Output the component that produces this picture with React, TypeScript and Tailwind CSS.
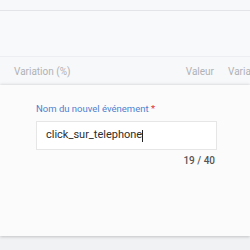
export default function App() {
  return (
    <div className="w-[250px] h-[250px] overflow-hidden bg-[#f4f5f7] font-['Roboto',_'Liberation_Sans',_sans-serif] flex flex-col">
      <div className="h-[11px] bg-[#f7f8fa] border-b border-[#e3e4e8]" />
      <div className="h-[46px] bg-[#f8f9fb] border-b border-[#eceef1]" />
      <div className="h-[28px] bg-[#f7f8fa] flex items-center text-[10px] text-[#b0b2b6] whitespace-nowrap">
        <span className="ml-[14px]">Variation (%)</span>
        <span className="ml-auto">Valeur</span>
        <span className="ml-[14px] w-[22px] overflow-hidden">Varia</span>
      </div>
      <div className="h-[151px] bg-[#fbfbfb] shadow-[0_1px_3px_rgba(0,0,0,0.18),0_-1px_3px_rgba(0,0,0,0.08)] flex flex-col pl-[36px] pt-[18px] relative z-10">
        <div className="text-[9.5px] text-[#4f7fce] leading-[12px]">
          Nom du nouvel événement <span className="text-[#d33]">*</span>
        </div>
        <div className="mt-[6px] w-[181px] h-[29px] border border-[#e6e6e6] bg-white flex items-center pl-[9px] text-[11px] text-[#2d2d2d]">
          click_sur_telephone
          <span className="w-px h-[12px] bg-[#222]" />
        </div>
        <div className="w-[181px] text-right text-[10px] font-medium text-[#555] mt-[3px] pr-[2px]">19 / 40</div>
      </div>
      <div className="flex-1 bg-[#f1f2f4]" />
    </div>
  );
}
